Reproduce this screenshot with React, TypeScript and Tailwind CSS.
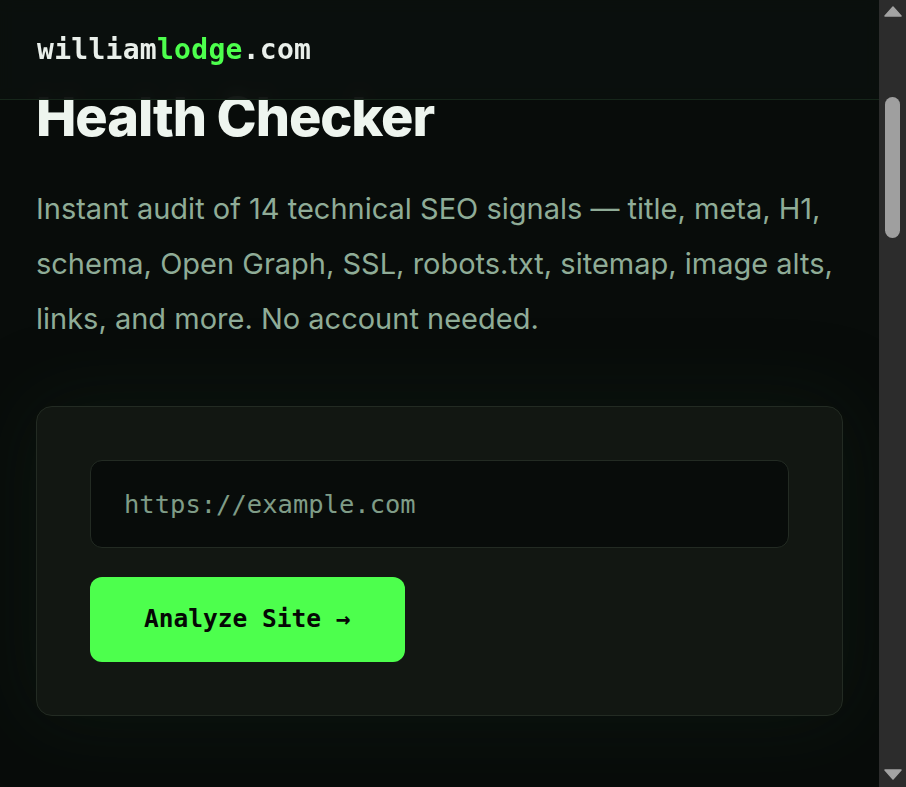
import { useState } from 'react';

const MONO = { fontFamily: '"DejaVu Sans Mono", "Liberation Mono", monospace' };
const SANS = { fontFamily: 'Inter, "Liberation Sans", sans-serif' };

function ScrollTrack() {
  return (
    <div className="w-[27px] shrink-0 h-full bg-[#2c2c2c] flex flex-col items-center">
      <svg width="18" height="12" viewBox="0 0 18 12" className="mt-[6px]">
        <path d="M9 1 L17 10 L1 10 Z" fill="#a3a3a3" strokeLinejoin="round" stroke="#a3a3a3" strokeWidth="1.5" />
      </svg>
      <div className="mt-[79px] w-[15px] h-[141px] rounded-full bg-[#9f9f9f]" />
      <div className="flex-1" />
      <svg width="18" height="12" viewBox="0 0 18 12" className="mb-[7px]">
        <path d="M1 2 L17 2 L9 11 Z" fill="#a3a3a3" strokeLinejoin="round" stroke="#a3a3a3" strokeWidth="1.5" />
      </svg>
    </div>
  );
}

export default function App() {
  const [url, setUrl] = useState('');

  return (
    <div className="h-[787px] flex bg-[#080c0a] overflow-hidden" style={SANS}>
      <div className="flex-1 h-full overflow-y-auto text-[#eef4ef] [scrollbar-width:none]">
        {/* Header */}
        <header className="sticky top-0 z-10 h-[100px] flex items-center px-[37px] bg-[#0b0f0d]/90 border-b border-[#16261a] backdrop-blur">
          <a href="#" className="text-[28px] font-bold leading-[1.5] tracking-[0.01em] text-[#e9efea]" style={MONO}>
            william<span className="text-[#4dff4d]">lodge</span>.com
          </a>
        </header>

        {/* Main */}
        <main className="px-[36px] pb-[3400px] -mt-[12px]">
          <h1 className="text-[54px] font-extrabold leading-[57px] tracking-[-0.02em] text-[#eef5ef]">
            Health Checker
          </h1>
          <p className="mt-[36px] text-[29px] leading-[55px] text-[#8fac97]">
            Instant audit of 14 technical SEO signals — title, meta, H1, schema, Open Graph, SSL, robots.txt, sitemap, image alts, links, and more. No account needed.
          </p>

          {/* Form card */}
          <div className="mt-[60px] rounded-2xl border border-[#232b23] bg-[#121712] p-[53px] shadow-[0_0_80px_rgba(20,40,25,0.35)]">
            <input
              type="text"
              value={url}
              onChange={(e) => setUrl(e.target.value)}
              placeholder="https://example.com"
              className="w-full h-[88px] rounded-xl border border-[#232b23] bg-[#080c0a] px-[33px] text-[25.5px] text-[#dfe8e1] placeholder:text-[#7f9c87] outline-none"
              style={MONO}
            />
            <button
              className="mt-[29px] h-[85px] px-[54px] rounded-xl bg-[#4dff4d] text-[24.5px] font-bold text-[#050805]"
              style={MONO}
            >
              Analyze Site →
            </button>
          </div>
        </main>
      </div>
      <ScrollTrack />
    </div>
  );
}
